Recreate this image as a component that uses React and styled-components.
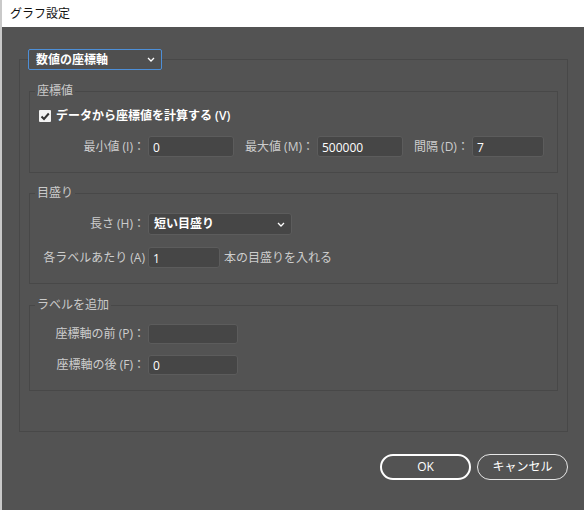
import React from 'react'
import styled, { createGlobalStyle } from 'styled-components'

const Global = createGlobalStyle`
  html, body { margin: 0; padding: 0; background: #535353; }
  body { font-family: "Open Sans", "Noto Sans CJK JP", sans-serif; font-size: 12px; }
  * { box-sizing: border-box; }
`

const Window = styled.div`
  width: 584px;
  height: 510px;
  display: flex;
  flex-direction: column;
  border-left: 2px solid #c9c9c9;
`

const TitleBar = styled.div`
  height: 27px;
  background: #fff;
  color: #111;
  display: flex;
  align-items: center;
  padding-left: 8px;
  font-size: 12px;
  line-height: 16px;
`

const Body = styled.div`
  flex: 1;
  background: #535353;
  padding: 22px 16px 0 17px;
  display: flex;
  flex-direction: column;
`

const Outer = styled.fieldset`
  width: 549px;
  margin: 0;
  padding: 13px 9px 40px 9px;
  border: 1px solid #484848;
  min-width: 0;
`

const OuterLegend = styled.legend`
  padding: 0;
  margin-left: -1px;
`

const AxisSelect = styled.div`
  width: 134px;
  height: 21px;
  border: 1px solid #4d8fd8;
  border-radius: 2px;
  background: #4f4f4f;
  display: flex;
  align-items: center;
  justify-content: space-between;
  padding: 0 6px 0 7px;
  color: #fff;
  font-weight: 700;
  font-size: 12px;
  line-height: 16px;
`

const Group = styled.fieldset`
  margin: ${p => p.$top || 0}px 0 0 0;
  padding: ${p => p.$pt}px 8px 15px 5px;
  border: 1px solid #484848;
  min-width: 0;
`

const GroupLegend = styled.legend`
  padding: 0 2px;
  color: #cacaca;
  font-size: 12px;
  line-height: 16px;
`

const Row = styled.div`
  display: flex;
  align-items: center;
  margin-top: ${p => p.$top || 0}px;
`

const Label = styled.span`
  color: #cdcdcd;
  font-size: 12px;
  line-height: 16px;
  white-space: nowrap;
  ${p => p.$col ? `width: 110px; text-align: right; margin-right: 3px;` : ''}
  ${p => p.$ml ? `margin-left: ${p.$ml}px; margin-right: 3px;` : ''}
  ${p => p.$after ? `margin-left: 4px;` : ''}
`

const Input = styled.div`
  width: ${p => p.$w}px;
  height: ${p => p.$h || 21}px;
  background: #464646;
  border: 1px solid #5c5c5c;
  border-radius: 3px;
  color: #fff;
  font-size: 12px;
  line-height: 16px;
  display: flex;
  align-items: center;
  padding: 2px 0 0 4px;
`

const Select = styled(Input)`
  font-weight: 700;
  justify-content: space-between;
  padding: 0 6px 0 5px;
`

const Check = styled.div`
  width: 12px;
  height: 12px;
  background: #f2f2f2;
  border-radius: 1px;
  margin: 0 5px 0 4px;
  display: flex;
  align-items: center;
  justify-content: center;
`

const CheckLabel = styled.span`
  color: #fff;
  font-size: 12px;
  line-height: 16px;
  font-weight: 600;
`

const Buttons = styled.div`
  display: flex;
  justify-content: flex-end;
  gap: 6px;
  margin-top: 22px;
`

const Button = styled.button`
  width: 91px;
  height: 26px;
  border-radius: 13px;
  background: transparent;
  border: ${p => p.$primary ? '2px solid #ffffff' : '1.5px solid #e6e6e6'};
  color: #fff;
  font-family: inherit;
  font-size: 12px;
  line-height: 16px;
  padding: 0;
`

const Chevron = () => (
  <svg width="8" height="5" viewBox="0 0 8 5">
    <polyline points="1,1 4,4 7,1" fill="none" stroke="#fff" strokeWidth="1.3" />
  </svg>
)

const Tick = () => (
  <svg width="10" height="9" viewBox="0 0 10 9">
    <polyline points="1.5,4.5 4,7 8.8,1.5" fill="none" stroke="#333" strokeWidth="2" />
  </svg>
)

export default function App() {
  return (
    <Window>
      <Global />
      <TitleBar>グラフ設定</TitleBar>
      <Body>
        <Outer>
          <OuterLegend>
            <AxisSelect>数値の座標軸<Chevron /></AxisSelect>
          </OuterLegend>

          <Group $pt={9}>
            <GroupLegend>座標値</GroupLegend>
            <Row>
              <Check><Tick /></Check>
              <CheckLabel>データから座標値を計算する (V)</CheckLabel>
            </Row>
            <Row $top={12}>
              <Label $col>最小値 (I)：</Label>
              <Input $w={86}>0</Input>
              <Label $ml={11}>最大値 (M)：</Label>
              <Input $w={86}>500000</Input>
              <Label $ml={11}>間隔 (D)：</Label>
              <Input $w={72}>7</Input>
            </Row>
          </Group>

          <Group $top={12} $pt={12}>
            <GroupLegend>目盛り</GroupLegend>
            <Row>
              <Label $col>長さ (H)：</Label>
              <Select $w={144} $h={22}>短い目盛り<Chevron /></Select>
            </Row>
            <Row $top={12}>
              <Label $col>各ラベルあたり (A)</Label>
              <Input $w={72}>1</Input>
              <Label $after>本の目盛りを入れる</Label>
            </Row>
          </Group>

          <Group $top={13} $pt={11}>
            <GroupLegend>ラベルを追加</GroupLegend>
            <Row>
              <Label $col>座標軸の前 (P)：</Label>
              <Input $w={90} $h={20}></Input>
            </Row>
            <Row $top={11}>
              <Label $col>座標軸の後 (F)：</Label>
              <Input $w={90} $h={20}>0</Input>
            </Row>
          </Group>
        </Outer>

        <Buttons>
          <Button $primary>OK</Button>
          <Button>キャンセル</Button>
        </Buttons>
      </Body>
    </Window>
  )
}
